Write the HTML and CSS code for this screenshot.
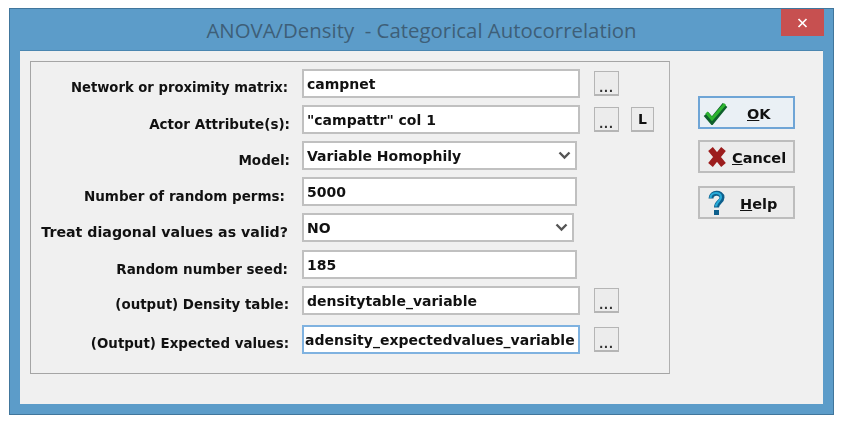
FILE: index.html
```html
<!DOCTYPE html>
<html lang="en">
<head>
    <meta charset="UTF-8">
    <title>ANOVA/Density - Categorical Autocorrelation</title>
    <link rel="stylesheet" href="styles.css">
</head>
<body>
    <div class="window">
        <div class="titlebar">
            <span class="title">ANOVA/Density&nbsp; - Categorical Autocorrelation</span>
            <button class="close-btn">
                <svg width="11" height="10" viewBox="0 0 11 10"><path d="M1.5 1 L9.5 9 M9.5 1 L1.5 9" stroke="#fff" stroke-width="1.700" fill="none"/></svg>
            </button>
        </div>
        <div class="content">
            <div class="group">
                <div class="row">
                    <label class="label label-small">Network or proximity matrix:</label>
                    <div class="field">campnet</div>
                    <button class="dots">...</button>
                </div>
                <div class="row">
                    <label class="label label-wide">Actor Attribute(s):</label>
                    <div class="field">"campattr" col 1</div>
                    <button class="dots">...</button>
                    <button class="small-btn">L</button>
                </div>
                <div class="row">
                    <label class="label label-wide">Model:</label>
                    <div class="field field-mid combo">Variable Homophily
                        <svg class="chevron" width="13" height="9" viewBox="0 0 13 9"><path d="M1.5 1.5 L6.5 6.5 L11.5 1.5" stroke="#555" stroke-width="2.4" fill="none"/></svg>
                    </div>
                </div>
                <div class="row">
                    <label class="label label-narrow">Number of random perms:</label>
                    <div class="field field-mid">5000</div>
                </div>
                <div class="row row-tall">
                    <label class="label label-treat">Treat diagonal values as valid?</label>
                    <div class="field field-short combo">NO
                        <svg class="chevron" width="13" height="9" viewBox="0 0 13 9"><path d="M1.5 1.5 L6.5 6.5 L11.5 1.5" stroke="#555" stroke-width="2.4" fill="none"/></svg>
                    </div>
                </div>
                <div class="row">
                    <label class="label">Random number seed:</label>
                    <div class="field field-mid">185</div>
                </div>
                <div class="row row-gap">
                    <label class="label label-mid">(output) Density table:</label>
                    <div class="field">densitytable_variable</div>
                    <button class="dots">...</button>
                </div>
                <div class="row">
                    <label class="label label-mid">(Output) Expected values:</label>
                    <div class="field field-focus">adensity_expectedvalues_variable</div>
                    <button class="dots">...</button>
                </div>
            </div>
            <div class="side">
                <button class="cmd cmd-default">
                    <svg width="25" height="24" viewBox="0 0 25 24"><path d="M3 13 L9 20 L22 4" stroke="#0f5f2c" stroke-width="6" fill="none"/><path d="M3.500 11.500 L9 18 L22 3" stroke="#2db52f" stroke-width="3" fill="none"/></svg>
                    <span class="cmd-text cmd-ok"><u>O</u>K</span>
                </button>
                <button class="cmd">
                    <svg width="20" height="22" viewBox="0 0 20 22"><path d="M3.500 3 L16.500 19 M16.500 3 L3.500 19" stroke="#9c1d1d" stroke-width="6" fill="none"/></svg>
                    <span class="cmd-text"><u>C</u>ancel</span>
                </button>
                <button class="cmd">
                    <svg width="18" height="26" viewBox="0 0 18 26"><path d="M4 8.500 C4 1.500 15 2 15 7.500 C15 12 9.500 12 9.500 17.500" stroke="#0e5f8c" stroke-width="5" fill="none"/><path d="M3.500 8 C3.500 1.500 14 1.500 14 7 C14 11 9 11.500 9 16.500" stroke="#29abd8" stroke-width="2.200" fill="none"/><rect x="7" y="20" width="5" height="5" fill="#0e5f8c"/></svg>
                    <span class="cmd-text cmd-help"><u>H</u>elp</span>
                </button>
            </div>
        </div>
    </div>
</body>
</html>
```

FILE: styles.css
```css
body {
    margin: 8px 0 0 9px;
    background-color: #fff;
    font-family: "DejaVu Sans", sans-serif;
}
.window {
    width: 825px;
    height: 407px;
    box-sizing: border-box;
    display: flex;
    flex-direction: column;
    background-color: #5c9cc9;
    border: 1px solid #41769c;
    padding: 0 10px 10px;
}
.titlebar {
    height: 41px;
    flex: none;
    position: relative;
    display: flex;
    justify-content: center;
    align-items: center;
}
.title {
    font-family: "Open Sans", sans-serif;
    font-size: 20.4px;
    color: #3e5f78;
}
.close-btn {
    position: absolute;
    top: 0;
    right: -1px;
    width: 43px;
    height: 27px;
    padding: 0;
    border: none;
    background-color: #c75050;
    display: flex;
    justify-content: center;
    align-items: center;
}
.content {
    flex: 1;
    display: flex;
    background-color: #f0f0f0;
    border-top: 1px solid #4a86b0;
    padding: 10px;
    filter: blur(0.3px);
}
.group {
    width: 640px;
    height: 313px;
    box-sizing: border-box;
    border: 1px solid #a5a5a5;
    border-right-color: #b0b0b0;
    padding-top: 7px;
}
.row {
    height: 36px;
    display: flex;
    align-items: flex-start;
}
.row-tall {
    height: 37px;
}
.row-gap {
    height: 39px;
}
.label {
    width: 259px;
    flex: none;
    box-sizing: border-box;
    margin-right: 12px;
    padding: 10px 2px 0 0;
    text-align: right;
    font-size: 13.5px;
    font-weight: bold;
    line-height: 18px;
    color: #111;
    white-space: nowrap;
}
.label-wide {
    padding-right: 0;
}
.label-mid {
    padding-right: 1px;
    font-size: 13.4px;
}
.label-narrow {
    padding-right: 5px;
}
.label-small {
    font-size: 13.2px;
}
.label-treat {
    font-size: 14.2px;
}
.field {
    width: 278px;
    height: 29px;
    flex: none;
    box-sizing: border-box;
    border: 2px solid #c0c0c0;
    background-color: #fff;
    padding: 4px 0 0 3px;
    font-size: 14px;
    font-weight: bold;
    line-height: 18px;
    color: #111;
    white-space: nowrap;
    overflow: hidden;
}
.field-mid {
    width: 275px;
}
.field-short {
    width: 272px;
}
.field-focus {
    border-color: #7fb2e0;
    padding-left: 1px;
}
.combo {
    display: flex;
    justify-content: space-between;
}
.chevron {
    margin: 4px 4px 0 0;
}
.dots {
    width: 25px;
    height: 25px;
    flex: none;
    margin: 2px 0 0 14px;
    padding: 0 0 2px;
    box-sizing: border-box;
    border: 1px solid #b5b5b5;
    border-bottom-width: 2px;
    background-color: #ececec;
    font-family: "Liberation Sans", Arial, sans-serif;
    font-size: 14px;
    font-weight: bold;
    letter-spacing: 1px;
    line-height: 30px;
    color: #333;
}
.small-btn {
    width: 23px;
    height: 25px;
    flex: none;
    margin: 2px 0 0 12px;
    padding: 0;
    box-sizing: border-box;
    border: 1px solid #b5b5b5;
    border-bottom-width: 2px;
    background-color: #ececec;
    font-family: "DejaVu Sans", sans-serif;
    font-size: 14px;
    font-weight: bold;
    color: #111;
}
.side {
    display: flex;
    flex-direction: column;
    gap: 11px;
    margin-left: 28px;
    padding-top: 35px;
}
.side .cmd:last-child {
    margin-top: 2px;
}
.cmd {
    width: 97px;
    height: 33px;
    box-sizing: border-box;
    display: flex;
    align-items: center;
    padding: 0 0 0 7px;
    border: 2px solid #bdbdbd;
    background-color: #ececec;
    font-family: "DejaVu Sans", sans-serif;
}
.cmd-default {
    border-color: #6fa5d6;
    background-color: #eaf0f5;
    padding-left: 3px;
}
.cmd-text {
    font-size: 14.5px;
    font-weight: bold;
    color: #111;
    margin-left: 5px;
    padding-top: 2px;
}
.cmd-ok {
    margin-left: 19px;
}
.cmd-help {
    margin-left: 15px;
}
```
